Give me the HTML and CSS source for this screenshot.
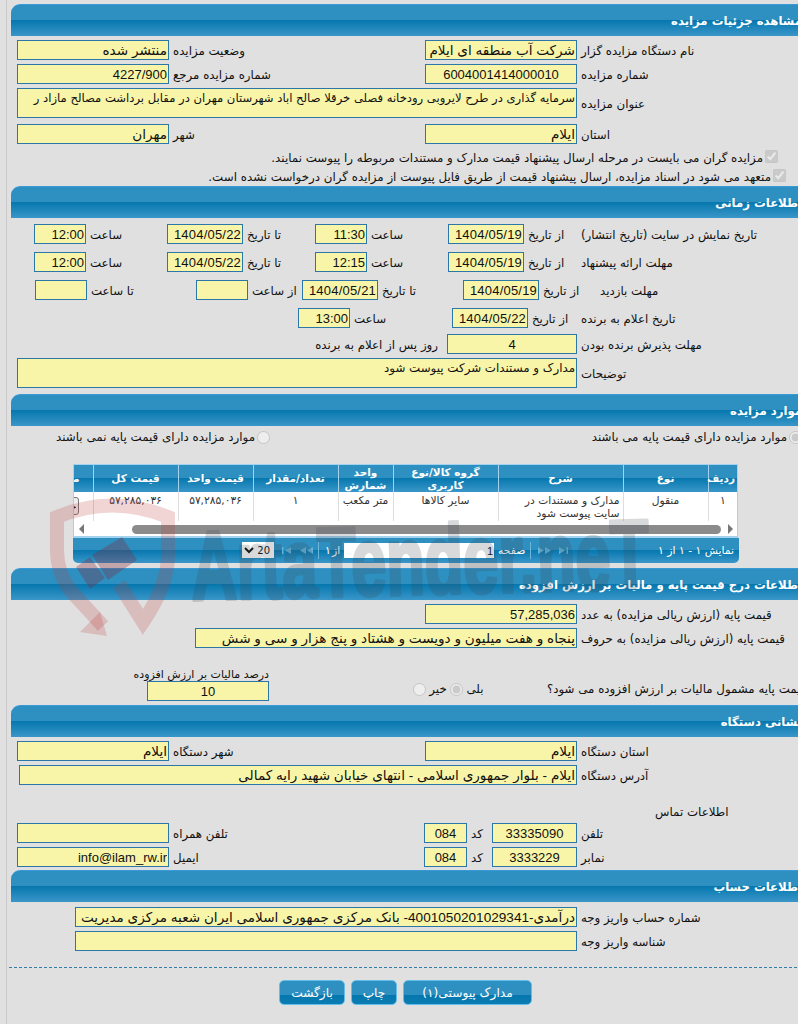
FILE: index.html
```html
<!DOCTYPE html>
<html lang="fa">
<head>
<meta charset="utf-8">
<title>مشاهده جزئیات مزایده</title>
<link rel="stylesheet" href="styles.css">
</head>
<body>
<div class="frame">
<main class="page">

<section class="sec s1">
  <h2 class="hd"><span>مشاهده جزئیات مزایده</span></h2>
  <div class="bd">
    <div class="row"><input class="in fa w152 tr" readonly value="منتشر شده" dir="rtl"><label class="lb g256">وضعیت مزایده</label><input class="in fa w152 tr" readonly value="شرکت آب منطقه ای ایلام" dir="rtl"><label class="lb">نام دستگاه مزایده گزار</label></div>
    <div class="row"><input class="in w152 tr" readonly value="4227/900"><label class="lb g256">شماره مزایده مرجع</label><input class="in w152 tc" readonly value="6004001414000010"><label class="lb">شماره مزایده</label></div>
    <div class="row rowta"><textarea class="in ta h30" readonly dir="rtl">سرمایه گذاری در طرح لایروبی رودخانه فصلی خرقلا صالح اباد شهرستان مهران در مقابل برداشت مصالح مازاد ر</textarea><label class="lb">عنوان مزایده</label></div>
    <div class="row mt6"><input class="in fa w152 tr" readonly value="مهران" dir="rtl"><label class="lb g256">شهر</label><input class="in fa w152 tr" readonly value="ایلام" dir="rtl"><label class="lb">استان</label></div>
    <div class="chk c1"><input type="checkbox" checked disabled><span>مزایده گران می بایست در مرحله ارسال پیشنهاد قیمت مدارک و مستندات مربوطه را پیوست نمایند.</span></div>
    <div class="chk c2"><input type="checkbox" checked disabled><span>متعهد می شود در اسناد مزایده، ارسال پیشنهاد قیمت از طریق فایل پیوست از مزایده گران درخواست نشده است.</span></div>
  </div>
</section>

<section class="sec s2">
  <h2 class="hd"><span>اطلاعات زمانی</span></h2>
  <div class="bd b2">
    <div class="row r8 p23"><input class="in w52 tr" readonly value="12:00"><label class="lb g81">ساعت</label><input class="in w76 tr" readonly value="1404/05/22"><label class="lb g72">تا تاریخ</label><input class="in w52 tr" readonly value="11:30"><label class="lb g81">ساعت</label><input class="in w76 tr" readonly value="1404/05/19"><label class="lb g57">از تاریخ</label><label class="lb">تاریخ نمایش در سایت (تاریخ انتشار)</label></div>
    <div class="row r8 p23"><input class="in w52 tr" readonly value="12:00"><label class="lb g81">ساعت</label><input class="in w76 tr" readonly value="1404/05/22"><label class="lb g72">تا تاریخ</label><input class="in w52 tr" readonly value="12:15"><label class="lb g81">ساعت</label><input class="in w76 tr" readonly value="1404/05/19"><label class="lb g57">از تاریخ</label><label class="lb">مهلت ارائه پیشنهاد</label></div>
    <div class="row r8 p24"><input class="in w52 tr" readonly><label class="lb g109">تا ساعت</label><input class="in w52 tr" readonly><label class="lb g54">از ساعت</label><input class="in w76 tr" readonly value="1404/05/21"><label class="lb g85">تا تاریخ</label><input class="in w76 tr" readonly value="1404/05/19"><label class="lb g57b">از تاریخ</label><label class="lb">مهلت بازدید</label></div>
    <div class="row r6 p287"><input class="in w52 tr" readonly value="13:00"><label class="lb g102">ساعت</label><input class="in w76 tr" readonly value="1404/05/22"><label class="lb g53">از تاریخ</label><label class="lb">تاریخ اعلام به برنده</label></div>
    <div class="row r4"><label class="lb days">روز پس از اعلام به برنده</label><input class="in w130 tc" readonly value="4"><label class="lb">مهلت پذیرش برنده بودن</label></div>
    <div class="row rowta"><textarea class="in ta ta2 h30" readonly dir="rtl">مدارک و مستندات شرکت پیوست شود</textarea><label class="lb">توضیحات</label></div>
  </div>
</section>

<section class="sec s3">
  <h2 class="hd"><span>موارد مزایده</span></h2>
  <div class="bd b3">
    <div class="radios">
      <div class="rg rg1"><input type="radio" disabled><span>موارد مزایده دارای قیمت پایه نمی باشند</span></div>
      <div class="rg rg2"><input type="radio" checked disabled><span>موارد مزایده دارای قیمت پایه می باشند</span></div>
    </div>
    <div class="grid">
      <div class="gridwrap">
        <table class="tb">
          <thead><tr><th class="c29">ردیف</th><th class="c85">نوع</th><th class="c125">شرح</th><th class="c105">گروه کالا/نوع کاربری</th><th class="c55">واحد شمارش</th><th class="c85">تعداد/مقدار</th><th class="c75">قیمت واحد</th><th class="c85">قیمت کل</th><th class="c60">مدارک</th></tr></thead>
          <tbody><tr><td>۱</td><td>منقول</td><td class="rt">مدارک و مستندات در سایت پیوست شود</td><td>سایر کالاها</td><td>متر مکعب</td><td>۱</td><td>۵۷,۲۸۵,۰۳۶</td><td>۵۷,۲۸۵,۰۳۶</td><td class="cbtn"><button class="mini" type="button">جزئیات</button></td></tr></tbody>
        </table>
      </div>
      <div class="sb"><i class="arr al"></i><div class="thumb"></div><i class="arr ar"></i></div>
    </div>
    <div class="pager">
      <select class="psel" dir="rtl" disabled><option>20</option></select>
      <svg class="pic first" viewBox="0 0 10 7"><path d="M0 0h1.5v7H0zM9 0v7L3 3.500z"/></svg>
      <svg class="pic prev" viewBox="0 0 13 7"><path d="M6 0v7L0 3.500zM13 0v7L7 3.500z"/></svg>
      <span class="psep s-a"></span>
      <span class="pt of1">۱</span><span class="pt of2">از</span>
      <input class="pin" readonly value="1">
      <span class="pt pg">صفحه</span>
      <span class="psep s-b"></span>
      <svg class="pic next" viewBox="0 0 13 7"><path d="M0 0v7l6-3.500zM7 0v7l6-3.500z"/></svg>
      <svg class="pic last" viewBox="0 0 10 7"><path d="M1 0v7l6-3.500zM8.500 0H10v7H8.500z"/></svg>
      <span class="pt show">نمایش ۱ - ۱ از ۱</span>
    </div>
  </div>
</section>

<section class="sec s4">
  <h2 class="hd"><span>اطلاعات درج قیمت پایه و مالیات بر ارزش افزوده</span></h2>
  <div class="bd">
    <div class="row p408"><input class="in w152 tr" readonly value="57,285,036"><label class="lb">قیمت پایه (ارزش ریالی مزایده) به عدد</label></div>
    <div class="row p178"><input class="in fa w382 tr" readonly dir="rtl" value="پنجاه و هفت میلیون و دویست و هشتاد و پنج هزار و سی و شش"><label class="lb">قیمت پایه (ارزش ریالی مزایده) به حروف</label></div>
    <div class="vat">
      <div class="vcol"><label class="vl">درصد مالیات بر ارزش افزوده</label><input class="in w122 tc" readonly value="10"></div>
      <div class="vr"><input type="radio" disabled><span class="rl1">خیر</span><input type="radio" checked disabled><span class="rl2">بلی</span></div>
      <label class="lb vq">قیمت پایه مشمول مالیات بر ارزش افزوده می شود؟</label>
    </div>
  </div>
</section>

<section class="sec s5">
  <h2 class="hd"><span>نشانی دستگاه</span></h2>
  <div class="bd">
    <div class="row"><input class="in fa w152 tr" readonly dir="rtl" value="ایلام"><label class="lb g256">شهر دستگاه</label><input class="in fa w152 tr" readonly dir="rtl" value="ایلام"><label class="lb">استان دستگاه</label></div>
    <div class="row p2"><input class="in fa w558 tr" readonly dir="rtl" value="ایلام - بلوار جمهوری اسلامی - انتهای خیابان شهید رایه کمالی"><label class="lb">آدرس دستگاه</label></div>
    <div class="contact">اطلاعات تماس</div>
    <div class="row"><input class="in w152 tr" readonly><label class="lb g255">تلفن همراه</label><input class="in w43 tc" readonly value="084"><label class="lb g25">کد</label><input class="in w85 tc" readonly value="33335090"><label class="lb">تلفن</label></div>
    <div class="row r3"><input class="in w152 tr" readonly value="info@ilam_rw.ir"><label class="lb g255">ایمیل</label><input class="in w43 tc" readonly value="084"><label class="lb g25">کد</label><input class="in w85 tc" readonly value="3333229"><label class="lb">نمابر</label></div>
  </div>
</section>

<section class="sec s6">
  <h2 class="hd"><span>اطلاعات حساب</span></h2>
  <div class="bd b6">
    <div class="row p58"><input class="in fa w502 tr" readonly dir="rtl" value="درآمدی-4001050201029341- بانک مرکزی جمهوری اسلامی ایران شعبه مرکزی مدیریت منابع"><label class="lb">شماره حساب واریز وجه</label></div>
    <div class="row p58"><input class="in w502 tr" readonly><label class="lb">شناسه واریز وجه</label></div>
  </div>
</section>

<div class="foot">
  <button class="btn b-doc" type="button">مدارک پیوستی(۱)</button>
  <button class="btn b-prn" type="button">چاپ</button>
  <button class="btn b-bak" type="button">بازگشت</button>
</div>

</main>
</div>

<svg class="wm" viewBox="0 0 798 1024" width="798" height="1024" aria-hidden="true">
  <path class="shield" d="M103 626 L70 590 Q57 572 57 550 V517 Q112 494 168 517 V555 Q168 585 143 622 L119 584"/>
  <path class="head" d="M80 632 L100 612 L107 636 Z"/>
  <path class="mark" d="M76 567 L90 557 L105 578 L90 589 Z M92 555 L122 537 L137 560 L108 580 Z"/>
  <text class="wmt" x="192" y="600" textLength="458" lengthAdjust="spacingAndGlyphs" transform="rotate(-1.500 192 600)">ArtaTender.neT</text>
</svg>
</body>
</html>
```

FILE: styles.css
```css
* { box-sizing: border-box; }
html, body { margin: 0; padding: 0; height: 1024px; overflow: hidden; background: #e0e0e0; }
body { font: 11.85px "DejaVu Sans", sans-serif; color: #111; position: relative; }
.frame { margin-left: 6px; padding-left: 4px; border-left: 1px solid #c8c8c8; height: 1024px; padding-top: 4px; }
.page { width: 801px; }

.sec { display: block; }
.hd {
  margin: 0; height: 32px; padding: 0 10px 0 0; direction: rtl; display: flex; align-items: center;
  font: bold 11.7px "DejaVu Sans", sans-serif; color: #fff;
  border-top: 1px solid #3a9ad8; border-top-left-radius: 9px;
  background: linear-gradient(#2e90c0 0, #2e90c0 15px, #0577ae 15px, #3a96c8 31px);
  white-space: nowrap;
}
.bd { padding: 4px 0 0 6px; }

.row { display: flex; height: 20px; margin-bottom: 4px; align-items: center; }
.rowta { height: 30px; }
.mt6 { margin-top: 6px; }
.r8 { margin-bottom: 8px; }
.r6 { margin-bottom: 6px; }
.r4 { margin-bottom: 4px; }
.r3 { margin-bottom: 3px; }

.lb { padding-left: 4px; padding-top: 2px; white-space: nowrap; flex: none; direction: rtl; text-align: left; font-size: 11.8px; line-height: 20px; }
.g256 { width: 256px; } .g255 { width: 255px; } .g81 { width: 81px; } .g72 { width: 72px; }
.g57 { width: 53px; } .g109 { width: 109px; } .g54 { width: 54px; } .g85 { width: 85px; }
.g57b { width: 57px; } .g102 { width: 102px; } .g53 { width: 49px; } .g25 { width: 25px; }

.in {
  flex: none; height: 20px; padding: 0 1px; border: 1px solid #2a77a8; border-radius: 0; outline: 0;
  background: #f8f5a8; color: #111; font: 13px "Liberation Sans", "DejaVu Sans", sans-serif; margin: 0;
}
.fa { font-size: 13.6px; }
.tr { text-align: right; } .tc { text-align: center; }
.w152 { width: 152px; } .w52 { width: 52px; } .w76 { width: 76px; letter-spacing: .2px; } .w130 { width: 130px; }
.w382 { width: 382px; } .w122 { width: 122px; } .w558 { width: 558px; } .w43 { width: 43px; }
.w85 { width: 85px; } .w502 { width: 502px; }
.ta { width: 560px; resize: none; overflow: hidden; line-height: 15px; padding: 2px 1px; text-align: right; font-family: "DejaVu Sans", sans-serif; font-size: 11.6px; }
.ta2 { font-size: 11.85px; }
.h30 { height: 30px; }

.p23 { padding-left: 17px; } .p24 { padding-left: 18px; } .p287 { padding-left: 281px; }
.p408 { padding-left: 408px; } .p178 { padding-left: 178px; }
.p2 { padding-left: 2px; } .p58 { padding-left: 58px; }
.days { width: 430px; text-align: right; padding: 2px 9px 0 0; }

.chk { display: flex; direction: rtl; height: 19px; align-items: center; font-size: 11.85px; white-space: nowrap; }
.chk input { margin: 0 0 0 2px; width: 13px; height: 13px; flex: none; position: relative; top: -1px; }
.c1 { width: 761px; } .c2 { width: 769px; }

.b2 { padding-top: 6px; padding-bottom: 6px; }
.b2 .rowta { margin-bottom: 0; }

.b3 { padding: 2px 0 5px 0; }
.radios { display: flex; height: 18px; align-items: center; font-size: 11.85px; }
.rg { display: flex; direction: rtl; white-space: nowrap; align-items: center; flex: none; }
.rg input { margin: 0 0 0 2px; width: 13px; height: 13px; flex: none; }
.rg1 { width: 259px; } .rg2 { width: 532px; }

.grid { margin: 18px 0 0 62px; width: 665px; border: 1px solid #a2d2ee; border-bottom-width: 2px; background: #fff; height: 74px; }
.gridwrap { overflow: hidden; direction: rtl; height: 56px; }
.tb { table-layout: fixed; width: 704px; border-collapse: collapse; direction: rtl; background: #fff; }
.tb th {
  height: 27px; padding: 0 2px; color: #fff; font: bold 10.5px/13px "DejaVu Sans", sans-serif; text-align: center;
  border-left: 1px solid #a2d2ee;
  background: linear-gradient(#2e90c0 0, #2e90c0 13px, #0577ae 13px, #3a96c8 27px);
}
.tb td { height: 29px; padding: 2px 3px 0; vertical-align: top; text-align: center; font-size: 10.7px; line-height: 13px; border-left: 1px solid #ddd; border-bottom: 1px solid #ddd; color: #333; }
.tb td.rt { text-align: right; padding-right: 3px; }
.c29 { width: 29px; } .c85 { width: 85px; } .c125 { width: 125px; } .c105 { width: 105px; } .c55 { width: 55px; } .c75 { width: 75px; } .c60 { width: 60px; }
.tb td.cbtn { padding: 5px 14px 0 0; text-align: right; overflow: hidden; }
.mini { width: 46px; height: 18px; padding: 0 1px 0 0; border: 1px solid #777; border-radius: 3px; background: #eee; font: 10px "DejaVu Sans", sans-serif; text-align: right; overflow: hidden; white-space: nowrap; }

.sb { display: flex; align-items: center; height: 16px; padding-left: 5px; }
.arr { width: 0; height: 0; border-style: solid; flex: none; }
.al { border-width: 5px 5px 5px 0; border-color: transparent #777 transparent transparent; }
.ar { border-width: 5px 0 5px 5px; border-color: transparent transparent transparent #777; margin-left: 7px; }
.thumb { width: 589px; height: 9px; background: #8b8b8b; border-radius: 5px; margin-left: 48px; flex: none; }

.pager {
  margin-left: 62px; width: 666px; height: 25px; display: flex; align-items: center; direction: ltr; position: relative; color: #fff; font-size: 10.8px;
  border-bottom-left-radius: 5px; border-bottom-right-radius: 5px;
  background: linear-gradient(#2e90c0 0, #2e90c0 12px, #0577ae 12px, #3a96c8 25px);
}
.psel { position: absolute; left: 169px; top: 4px; width: 32px; height: 16px; padding: 0; border: 0; background: #fff; color: #111; font: 10px "DejaVu Sans", sans-serif; opacity: 1; }
.pic { position: absolute; top: 9px; height: 7px; fill: #62b4dc; }
.first { left: 209px; width: 10px; } .prev { left: 227px; width: 13px; }
.next { left: 465px; width: 13px; } .last { left: 485px; width: 10px; }
.psep { position: absolute; top: 4px; width: 1px; height: 17px; background: #6cb6da; }
.s-a { left: 245px; } .s-b { left: 457px; }
.pt { position: absolute; top: 5px; white-space: nowrap; line-height: 15px; }
.of1 { left: 252px; } .of2 { left: 259px; }
.pin { position: absolute; left: 271px; top: 5px; width: 150px; height: 15px; padding: 0 1px; border: 0; background: #fff; text-align: right; font: 11px "Liberation Sans", sans-serif; color: #111; }
.pg { left: 425px; } .show { left: 585px; }

.vat { display: flex; height: 37px; margin-top: 16px; align-items: flex-end; margin-bottom: 4px; }
.vcol { width: 122px; margin-left: 130px; flex: none; display: flex; flex-direction: column; direction: rtl; }
.vl { white-space: nowrap; line-height: 13px; font-size: 11px; display: block; }
.vr { flex: none; width: 134px; margin-left: 144px; display: flex; align-items: center; height: 18px; margin-bottom: 3px; }
.vr input { margin: 0; width: 13px; height: 13px; flex: none; }
.rl1 { width: 24px; text-align: center; } .rl2 { width: 24px; text-align: center; }
.vq { margin-bottom: 2px; padding-left: 0; }

.contact { padding-left: 638px; height: 34px; padding-top: 15px; direction: ltr; line-height: 16px; }
.b6 { padding-top: 5px; padding-bottom: 0; }

.foot { margin: 16px 0 0 -2px; padding-top: 12px; border-top: 1px dashed #2f7fa8; display: flex; direction: rtl; justify-content: center; gap: 6px; padding-right: 10px; }
.btn {
  height: 25px; padding: 0; color: #fff; font: 12.2px "DejaVu Sans", sans-serif; border: 1px solid #62bde8; border-radius: 5px;
  background: linear-gradient(#2e90c0 0, #2e90c0 60%, #0577ae 62%, #0b7db2 100%);
}
.b-doc { width: 129px; } .b-prn { width: 46px; } .b-bak { width: 66px; }

.wm { position: absolute; left: 0; top: 0; pointer-events: none; }
.shield { fill: none; stroke: rgba(190, 60, 60, .22); stroke-width: 14; }
.head { fill: rgba(190, 60, 60, .22); }
.mark { fill: rgba(130, 40, 60, .32); }
.wmt { font: bold 98px "Liberation Sans", sans-serif; fill: #3c4650; stroke: #3c4650; stroke-width: 4px; stroke-linejoin: round; opacity: .2; }
```
